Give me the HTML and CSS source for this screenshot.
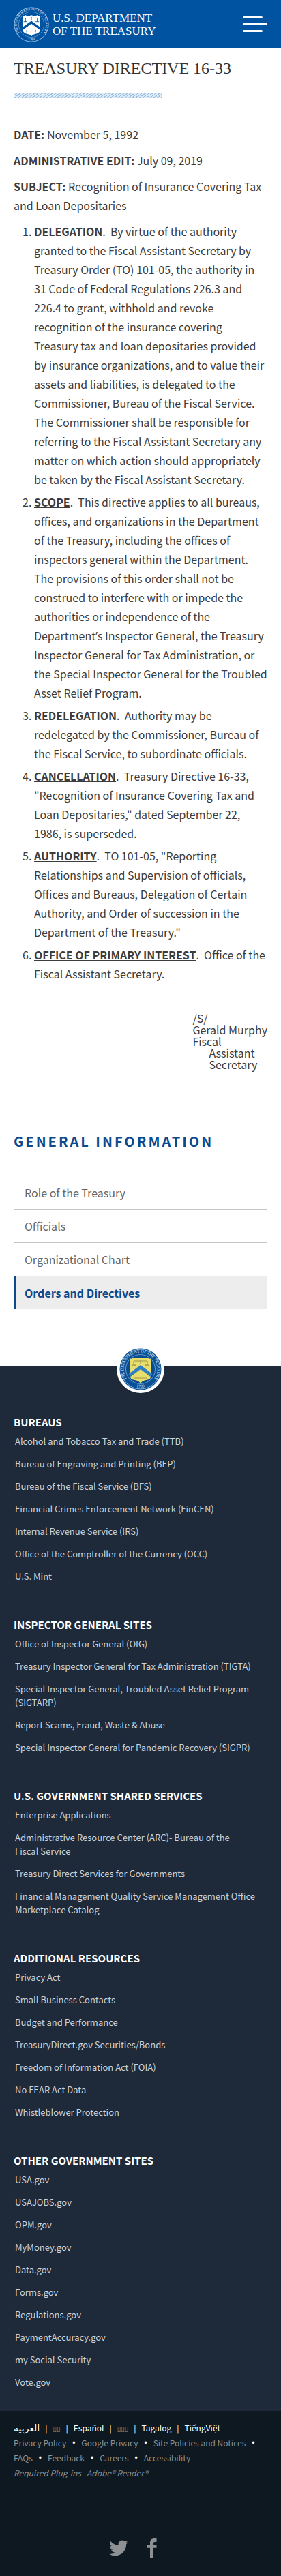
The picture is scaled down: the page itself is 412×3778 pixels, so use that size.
FILE: index.html
```html
<!DOCTYPE html>
<html lang="en">
<head>
<meta charset="utf-8">
<meta name="viewport" content="width=device-width, initial-scale=1">
<title>Treasury Directive 16-33</title>
<link rel="stylesheet" href="styles.css">
</head>
<body>
<header class="site-header">
  <a class="brand" href="#">
    <svg class="brand-seal" viewBox="0 0 60 60" aria-hidden="true">
      <defs>
        <path id="ring-top" d="M9.500 43.500A24.500 24.500 0 1 1 50.500 43.500"/>
        <path id="ring-bottom" d="M18 54A27 27 0 0 0 42 54"/>
      </defs>
      <circle cx="30" cy="30" r="29" fill="none" stroke="#a9c9ea" stroke-width="1"/>
      <circle cx="30" cy="30" r="21.500" fill="none" stroke="#7ba9d8" stroke-width=".8"/>
      <text class="seal-text" fill="#e4effa"><textPath href="#ring-top" startOffset="50%" text-anchor="middle">THE DEPARTMENT OF THE TREASURY</textPath></text>
      <text class="seal-text" fill="#e4effa"><textPath href="#ring-bottom" startOffset="50%" text-anchor="middle">1789</textPath></text>
      <path fill="#fff" d="M15 16q4 0 5-2 4 2 10 0 6 2 10 0 1 2 5 2v21q0 8-8 9-5 1-7 4-2-3-7-4-8-1-8-9z"/>
      <path fill="none" stroke="#0053a1" stroke-width="4" d="M15 37l15-11 15 11"/>
      <path fill="none" stroke="#0053a1" stroke-width="1" d="M20 19h20M30 17v5M20 19v6M40 19v6M17 25h6M37 25h6M22 41h15M37 39v4M22 39v4"/>
    </svg>
    <span class="brand-name">U.S. DEPARTMENT<br>OF THE TREASURY</span>
  </a>
  <button class="menu-button" type="button" aria-label="Open menu">
    <span class="bar"></span><span class="bar bar-long"></span><span class="bar"></span>
  </button>
</header>

<main class="content">
  <h1 class="title">TREASURY DIRECTIVE 16-33</h1>
  <div class="stripe"></div>
  <article class="directive">
    <p><b>DATE:</b> November 5, 1992</p>
    <p><b>ADMINISTRATIVE EDIT:</b> July 09, 2019</p>
    <p><b>SUBJECT:</b> Recognition of Insurance Covering Tax and Loan Depositaries</p>
    <ol class="clauses">
      <li><b class="clause">DELEGATION</b>.&nbsp; By virtue of the authority granted to the Fiscal Assistant Secretary by Treasury Order (TO) 101-05, the authority in 31 Code of Federal Regulations 226.3 and 226.4 to grant, withhold and revoke recognition of the insurance covering Treasury&nbsp;tax and loan depositaries provided by insurance organizations, and to value their assets and liabilities, is delegated to the Commissioner, Bureau of the Fiscal Service. The Commissioner shall be responsible for referring to the Fiscal Assistant Secretary any matter on which action should appropriately be taken by the Fiscal Assistant Secretary.</li>
      <li><b class="clause">SCOPE</b>.&nbsp; This directive applies to all bureaus, offices, and organizations in the Department of the Treasury, including the offices of inspectors general within the Department. The provisions of this order shall not be construed to interfere with or impede the authorities or independence of the Department<span class="mark">’</span>s Inspector General, the Treasury Inspector General for Tax Administration, or the Special Inspector General for the Troubled Asset Relief Program.</li>
      <li><b class="clause">REDELEGATION</b>.&nbsp; Authority may be redelegated by the Commissioner, Bureau of the Fiscal Service, to subordinate officials.</li>
      <li><b class="clause">CANCELLATION</b>.&nbsp; Treasury Directive 16-33, "Recognition of Insurance Covering Tax and Loan Depositaries," dated September 22, 1986, is superseded.</li>
      <li><b class="clause">AUTHORITY</b>.&nbsp; TO 101-05, "Reporting Relationships and Supervision of officials, Offices and Bureaus, Delegation of Certain Authority, and Order of succession in the Department of the Treasury."</li>
      <li><b class="clause">OFFICE OF PRIMARY INTEREST</b>.&nbsp; Office of the Fiscal Assistant Secretary.</li>
    </ol>
    <div class="signature">
      <div>/S/</div>
      <div>Gerald Murphy</div>
      <div>Fiscal</div>
      <div class="signature-role">Assistant<br>Secretary</div>
    </div>
  </article>

  <nav class="section-nav" aria-labelledby="section-title">
    <h2 class="section-title" id="section-title">GENERAL INFORMATION</h2>
    <ul class="section-list">
      <li><a href="#">Role of the Treasury</a></li>
      <li><a href="#">Officials</a></li>
      <li><a href="#">Organizational Chart</a></li>
      <li class="active"><a href="#" aria-current="page">Orders and Directives</a></li>
    </ul>
  </nav>
</main>

<footer class="site-footer">
  <div class="links-area">
    <svg class="footer-seal" viewBox="-5 -5 70 70" aria-hidden="true">
      <circle cx="30" cy="30" r="35" fill="#fff"/>
      <circle cx="30" cy="30" r="30.500" fill="#0b4f94"/>
      <circle cx="30" cy="30" r="29" fill="none" stroke="#86b6dc" stroke-width="1"/>
      <circle cx="30" cy="30" r="21.500" fill="#0b4c90" stroke="#5d9fd4" stroke-width="1"/>
      <text class="seal-text" fill="#d4e8f7"><textPath href="#ring-top" startOffset="50%" text-anchor="middle">THE DEPARTMENT OF THE TREASURY</textPath></text>
      <text class="seal-text" fill="#d4e8f7"><textPath href="#ring-bottom" startOffset="50%" text-anchor="middle">1789</textPath></text>
      <path fill="#e9de6b" d="M14 15q4 0 6-2 4 2 10 0 6 2 10 0 2 2 6 2v23q0 7-8 8-6 1-8 5-2-4-8-5-8-1-8-8z"/>
      <path fill="none" stroke="#2f7fc4" stroke-width="5" d="M14 39l16-12 16 12"/>
      <path fill="none" stroke="#9b9550" stroke-width="1" d="M20 18h20M30 16v6M20 18v6M40 18v6M17 24q3 3 6 0zM37 24q3 3 6 0zM20 43h20"/>
    </svg>
    <section class="link-group">
      <h2>BUREAUS</h2>
      <ul>
        <li><a href="#">Alcohol and Tobacco Tax and Trade (TTB)</a></li>
        <li><a href="#">Bureau of Engraving and Printing (BEP)</a></li>
        <li><a href="#">Bureau of the Fiscal Service (BFS)</a></li>
        <li><a href="#">Financial Crimes Enforcement Network (FinCEN)</a></li>
        <li><a href="#">Internal Revenue Service (IRS)</a></li>
        <li><a href="#">Office of the Comptroller of the Currency (OCC)</a></li>
        <li><a href="#">U.S. Mint</a></li>
      </ul>
    </section>
    <section class="link-group">
      <h2>INSPECTOR GENERAL SITES</h2>
      <ul>
        <li><a href="#">Office of Inspector General (OIG)</a></li>
        <li><a href="#">Treasury Inspector General for Tax Administration (TIGTA)</a></li>
        <li><a href="#">Special Inspector General, Troubled Asset Relief Program (SIGTARP)</a></li>
        <li><a href="#">Report Scams, Fraud, Waste &amp; Abuse</a></li>
        <li><a href="#">Special Inspector General for Pandemic Recovery (SIGPR)</a></li>
      </ul>
    </section>
    <section class="link-group">
      <h2>U.S. GOVERNMENT SHARED SERVICES</h2>
      <ul>
        <li><a href="#">Enterprise Applications</a></li>
        <li><a href="#">Administrative Resource Center (ARC)- Bureau of the Fiscal&nbsp;Service</a></li>
        <li><a href="#">Treasury Direct Services for Governments</a></li>
        <li><a href="#">Financial Management Quality Service Management Office Marketplace Catalog</a></li>
      </ul>
    </section>
    <section class="link-group">
      <h2>ADDITIONAL RESOURCES</h2>
      <ul>
        <li><a href="#">Privacy Act</a></li>
        <li><a href="#">Small Business Contacts</a></li>
        <li><a href="#">Budget and Performance</a></li>
        <li><a href="#">TreasuryDirect.gov Securities/Bonds</a></li>
        <li><a href="#">Freedom of Information Act (FOIA)</a></li>
        <li><a href="#">No FEAR Act Data</a></li>
        <li><a href="#">Whistleblower Protection</a></li>
      </ul>
    </section>
    <section class="link-group">
      <h2>OTHER GOVERNMENT SITES</h2>
      <ul>
        <li><a href="#">USA.gov</a></li>
        <li><a href="#">USAJOBS.gov</a></li>
        <li><a href="#">OPM.gov</a></li>
        <li><a href="#">MyMoney.gov</a></li>
        <li><a href="#">Data.gov</a></li>
        <li><a href="#">Forms.gov</a></li>
        <li><a href="#">Regulations.gov</a></li>
        <li><a href="#">PaymentAccuracy.gov</a></li>
        <li><a href="#">my Social Security</a></li>
        <li><a href="#">Vote.gov</a></li>
      </ul>
    </section>
  </div>
  <div class="legal">
    <ul class="languages">
      <li><a class="arabic" href="#" lang="ar">العربية</a></li>
      <li><a class="boxes" href="#">▯▯</a></li>
      <li><a href="#" lang="es">Español</a></li>
      <li><a class="boxes" href="#">▯▯▯</a></li>
      <li><a href="#" lang="tl">Tagalog</a></li>
      <li><a href="#" lang="vi">TiếngViệt</a></li>
    </ul>
    <ul class="policies">
      <li><a href="#">Privacy Policy</a></li>
      <li><a href="#">Google Privacy</a></li>
      <li><a href="#">Site Policies and Notices</a></li>
      <li><a href="#">FAQs</a></li>
      <li><a href="#">Feedback</a></li>
      <li><a href="#">Careers</a></li>
      <li><a href="#">Accessibility</a></li>
    </ul>
    <p class="plugins"><span>Required Plug-ins</span><a href="#">Adobe® Reader®</a></p>
    <div class="social">
      <a href="#" aria-label="Twitter"><svg width="28" height="28" viewBox="0 0 24 24" fill="#8d9194"><path d="M23.950 4.570a10 10 0 0 1-2.820.770 4.960 4.960 0 0 0 2.160-2.720c-.950.550-2 .950-3.130 1.180a4.920 4.920 0 0 0-8.380 4.480C7.690 8.090 4.070 6.130 1.640 3.160a4.920 4.920 0 0 0 1.520 6.570 4.900 4.900 0 0 1-2.230-.610v.060a4.920 4.920 0 0 0 3.950 4.830 5 5 0 0 1-2.210.080 4.940 4.940 0 0 0 4.600 3.420A9.870 9.870 0 0 1 0 19.540a14 14 0 0 0 7.550 2.210c9.050 0 14-7.500 14-13.980 0-.210 0-.420-.020-.630a9.940 9.940 0 0 0 2.460-2.550z"/></svg></a>
      <a href="#" aria-label="Facebook"><svg width="14" height="28" viewBox="0 0 14 28" fill="#8d9194"><path d="M13.500 0v5h-2.700C9.300 5 9 5.800 9 7v2.500h4.500v4.300H9V28H4V13.800H0V9.500h4V6c0-4 2.500-6 6-6z"/></svg></a>
    </div>
  </div>
</footer>
</body>
</html>
```
FILE: styles.css
```css
* { box-sizing: border-box; }

body {
  margin: 0;
  background: #fff;
  color: #3c3c3c;
  font-family: "Noto Sans CJK SC", "DejaVu Sans", sans-serif;
  font-size: 16px;
  line-height: 28px;
}

ul, ol, p, h1, h2 { margin: 0; padding: 0; }
ul { list-style: none; }
a { color: inherit; text-decoration: none; }

.site-header {
  display: flex;
  align-items: center;
  justify-content: space-between;
  height: 71px;
  padding: 0 20px;
  background: #0053a1;
}
.brand { display: flex; align-items: center; gap: 5px; color: #fff; }
.brand-seal { width: 52px; height: 52px; }
.brand-name { font-family: "Liberation Serif", serif; font-size: 17px; line-height: 19px; }
.seal-text { font-family: "Liberation Serif", serif; font-size: 6px; }
.menu-button {
  display: flex;
  flex-direction: column;
  gap: 7px;
  width: 36px;
  padding: 0;
  border: 0;
  background: none;
}
.bar { width: 29px; height: 3px; border-radius: 2px; background: #fff; }
.bar-long { width: 36px; }

.content { padding: 11px 20px 83px; }
.title {
  color: #333;
  font: 400 24px/36px "Liberation Serif", serif;
}
.stripe {
  width: 218px;
  height: 8px;
  margin: 18px 0 39px;
  background: repeating-linear-gradient(145deg, #9dbfe0 0 1px, #dceaf8 1px 3px);
}
.directive p { margin-bottom: 10px; }
.clauses { margin-right: -2px; padding-left: 30px; }
.clauses li { margin-bottom: 5px; }
.clause { text-decoration: underline; }
.mark { font-family: "Open Sans", sans-serif; line-height: 1; }
.signature {
  width: fit-content;
  margin: 43px 0 0 auto;
  line-height: 17px;
}
.signature-role { padding-left: 24px; }

.section-nav { margin-top: 90px; }
.section-title {
  color: #0b4a8c;
  font-size: 20px;
  letter-spacing: 3px;
}
.section-list { margin-top: 37px; color: #666; }
.section-list li { border-bottom: 1px solid #c4c4c4; }
.section-list a { display: block; padding: 10px 16px; }
.section-list .active {
  border-left: 4px solid #0b4a8c;
  border-bottom: 0;
  background: #ededed;
  color: #0b4a8c;
  font-weight: 700;
}
.section-list .active a { padding-left: 12px; }

.links-area {
  position: relative;
  padding: 71px 20px 32px;
  background: #1e2a3a;
  color: #ccd2d8;
  font-size: 13px;
  line-height: 20px;
}
.footer-seal {
  position: absolute;
  top: -30px;
  left: calc(50% - 35px);
  width: 70px;
  height: 70px;
}
.link-group + .link-group { margin-top: 49px; }
.link-group h2 { color: #fff; font-size: 15px; font-weight: 700; line-height: 24px; }
.link-group ul { display: grid; gap: 13px; padding: 6px 0 0 2px; }

.legal {
  padding: 14px 20px 27px;
  background: #0d1820;
  color: #8d9194;
  font-size: 12px;
  line-height: 22px;
}
.languages, .policies { display: flex; flex-wrap: wrap; color: #fff; }
.languages li { height: 22px; }
.languages li + li::before { content: "|"; padding: 0 8px; }
.arabic { font-family: "DejaVu Sans", sans-serif; font-size: 14px; }
.boxes { color: #8d9194; font-size: 10px; }
.policies a { color: #8d9194; }
.policies li { display: flex; }
.policies li:not(:last-child)::after {
  content: "•";
  padding: 0 9px;
  color: #fff;
  font-family: "Liberation Sans", sans-serif;
}
.plugins { display: flex; gap: 8px; font-style: italic; }
.social {
  display: flex;
  align-items: center;
  justify-content: center;
  gap: 28px;
  margin: 85px 22px 0 0;
}
.social svg { display: block; }
```
